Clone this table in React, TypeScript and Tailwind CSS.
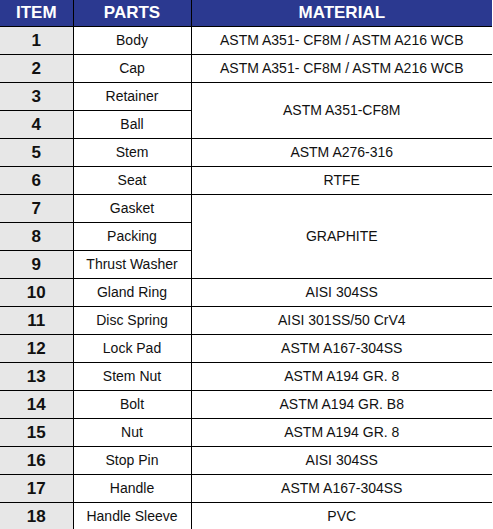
import React from 'react';

interface Row {
  item: number;
  part: string;
  material?: string;
  span?: number;
}

const rows: Row[] = [
  { item: 1, part: 'Body', material: 'ASTM A351- CF8M / ASTM A216 WCB' },
  { item: 2, part: 'Cap', material: 'ASTM A351- CF8M / ASTM A216 WCB' },
  { item: 3, part: 'Retainer', material: 'ASTM A351-CF8M', span: 2 },
  { item: 4, part: 'Ball' },
  { item: 5, part: 'Stem', material: 'ASTM A276-316' },
  { item: 6, part: 'Seat', material: 'RTFE' },
  { item: 7, part: 'Gasket', material: 'GRAPHITE', span: 3 },
  { item: 8, part: 'Packing' },
  { item: 9, part: 'Thrust Washer' },
  { item: 10, part: 'Gland Ring', material: 'AISI 304SS' },
  { item: 11, part: 'Disc Spring', material: 'AISI 301SS/50 CrV4' },
  { item: 12, part: 'Lock Pad', material: 'ASTM A167-304SS' },
  { item: 13, part: 'Stem Nut', material: 'ASTM A194 GR. 8' },
  { item: 14, part: 'Bolt', material: 'ASTM A194 GR. B8' },
  { item: 15, part: 'Nut', material: 'ASTM A194 GR. 8' },
  { item: 16, part: 'Stop Pin', material: 'AISI 304SS' },
  { item: 17, part: 'Handle', material: 'ASTM A167-304SS' },
  { item: 18, part: 'Handle Sleeve', material: 'PVC' },
];

export default function App() {
  return (
    <div className="w-[493px] h-[529px] overflow-hidden bg-white font-['Liberation_Sans',Arial,sans-serif]">
      <table className="w-[492px] border-collapse table-fixed">
        <colgroup>
          <col className="w-[73px]" />
          <col className="w-[118px]" />
          <col />
        </colgroup>
        <thead>
          {/* Header */}
          <tr className="h-[26px] bg-[#2b3990] text-white text-[17px] font-bold">
            <th className="border-b border-black p-0 leading-none">ITEM</th>
            <th className="border-b border-l border-black p-0 leading-none">PARTS</th>
            <th className="border-b border-l border-black p-0 leading-none">MATERIAL</th>
          </tr>
        </thead>
        <tbody>
          {rows.map((row) => (
            <tr key={row.item} className="h-[28px] text-[14px] text-[#111]">
              <td className="border-b border-black bg-[#e7e7e7] p-0 text-center text-[17px] font-bold leading-none">
                {row.item}
              </td>
              <td className="border-b border-l border-black p-0 text-center leading-none">{row.part}</td>
              {row.material && (
                <td
                  rowSpan={row.span}
                  className="border-b border-l border-black p-0 text-center leading-none"
                >
                  {row.material}
                </td>
              )}
            </tr>
          ))}
        </tbody>
      </table>
    </div>
  );
}
